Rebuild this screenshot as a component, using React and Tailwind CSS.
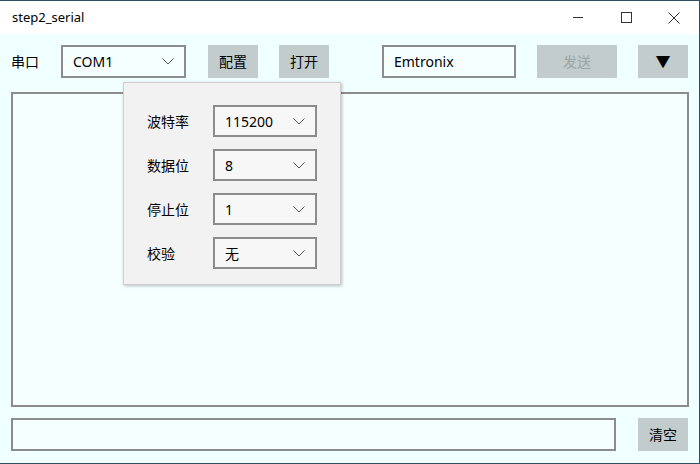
import React from "react";

const font = { fontFamily: '"Noto Sans", "Noto Sans CJK SC", sans-serif' };

function Chevron() {
  return (
    <svg width="12" height="7" viewBox="0 0 12 7" className="shrink-0">
      <path d="M0.5 0.5 L6 6 L11.5 0.5" fill="none" stroke="#555" strokeWidth="1" />
    </svg>
  );
}

function Combo({ value, w, bg }) {
  return (
    <div
      className={`flex items-center justify-between h-full border-2 border-[#8c8c8c] pl-[10px] pr-[10px] text-[14px] text-black ${bg}`}
      style={{ width: w }}
    >
      <span>{value}</span>
      <Chevron />
    </div>
  );
}

function Btn({ children, w, disabled }) {
  return (
    <div
      className={`flex items-center justify-center h-full bg-[#c2cccc] text-[14px] ${disabled ? "text-[#9aa4a4]" : "text-black"}`}
      style={{ width: w }}
    >
      {children}
    </div>
  );
}

export default function App() {
  return (
    <div className="w-[700px] h-[464px] flex flex-col bg-[#f0ffff] border-t border-r border-b border-[#2f4f63] relative overflow-hidden" style={font}>
      <div className="h-[33px] bg-white flex items-center shrink-0">
        <span className="ml-[12px] text-[13px] text-black">step2_serial</span>
        <div className="ml-auto flex items-center h-full mr-[1px]">
          <div className="w-[48px] h-full flex items-center justify-center">
            <div className="w-[10px] h-px bg-[#333]" />
          </div>
          <div className="w-[48px] h-full flex items-center justify-center">
            <div className="w-[11px] h-[11px] border border-[#333]" />
          </div>
          <div className="w-[48px] h-full flex items-center justify-center">
            <svg width="12" height="12" viewBox="0 0 12 12">
              <path d="M0.5 0.5 L11.5 11.5 M11.5 0.5 L0.5 11.5" stroke="#333" strokeWidth="1" />
            </svg>
          </div>
        </div>
      </div>

      <div className="flex items-center h-[33px] mt-[11px] ml-[11px] shrink-0">
        <span className="text-[14px] text-black w-[50px]">串口</span>
        <Combo value="COM1" w={125} bg="bg-[#f5ffff]" />
        <div className="w-[22px]" />
        <Btn w={50}>配置</Btn>
        <div className="w-[21px]" />
        <Btn w={50}>打开</Btn>
        <div className="w-[53px]" />
        <div className="w-[134px] h-full border-2 border-[#8c8c8c] bg-[#f5ffff] flex items-center pl-[10px] text-[14px] text-black">
          Emtronix
        </div>
        <div className="w-[21px]" />
        <Btn w={80} disabled>发送</Btn>
        <div className="w-[21px]" />
        <Btn w={50}>
          <span className="text-[15px] leading-none">▼</span>
        </Btn>
      </div>

      <div className="mt-[14px] ml-[11px] w-[678px] h-[315px] border-2 border-[#8c8c8c] bg-[#f5ffff] shrink-0" />

      <div className="flex mt-[11px] ml-[11px] h-[33px] shrink-0">
        <div className="w-[605px] h-full border-2 border-[#8c8c8c] bg-[#f5ffff]" />
        <div className="w-[22px]" />
        <Btn w={50}>清空</Btn>
      </div>

      <div className="absolute left-[123px] top-[81px] w-[218px] h-[203px] bg-[#f2f2f2] border border-[#cfcfcf] shadow-[1px_1px_3px_rgba(0,0,0,0.25)] flex flex-col gap-[12px] pt-[22px] pl-[23px]">
        {[
          ["波特率", "115200"],
          ["数据位", "8"],
          ["停止位", "1"],
          ["校验", "无"],
        ].map(([l, v]) => (
          <div key={l} className="flex items-center h-[32px]">
            <span className="w-[66px] text-[14px] text-black">{l}</span>
            <Combo value={v} w={104} bg="bg-[#f7f7f7]" />
          </div>
        ))}
      </div>
    </div>
  );
}
